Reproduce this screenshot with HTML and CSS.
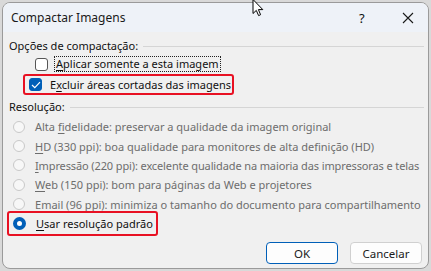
FILE: index.html
```html
<!DOCTYPE html>
<html lang="pt">
<head>
<meta charset="utf-8">
<link rel="stylesheet" href="styles.css">
</head>
<body>
<div class="dialog">
  <div class="titlebar">
    <span class="title">Compactar Imagens</span>
    <span class="help">?</span>
    <svg class="close" width="12" height="12" viewBox="0 0 12 12"><path d="M1 1L11 11M11 1L1 11" stroke="#1a1a1a" stroke-width="1.1" fill="none"/></svg>
  </div>
  <div class="body">
    <div class="group-title"><span>Opções de compactação:</span><i class="rule"></i></div>
    <div class="checks">
      <div class="row check"><span class="box"></span><span class="label focus"><u>A</u>plicar somente a esta imagem</span></div>
      <div class="row check hl"><span class="box on"><svg width="10" height="8" viewBox="0 0 10 8"><path d="M1 4L3.8 6.6L9 1.2" stroke="#fff" stroke-width="1.2" fill="none"/></svg></span><span class="label">E<u>x</u>cluir áreas cortadas das imagens</span></div>
    </div>
    <div class="group-title res"><span>Resolução:</span><i class="rule"></i></div>
    <div class="radios">
      <div class="row radio dis"><span class="dot"></span><span class="label">Alta <u>f</u>idelidade: preservar a qualidade da imagem original</span></div>
      <div class="row radio dis"><span class="dot"></span><span class="label"><u>H</u>D (330 ppi): boa qualidade para monitores de alta definição (HD)</span></div>
      <div class="row radio dis"><span class="dot"></span><span class="label tight"><u>I</u>mpressão (220 ppi): excelente qualidade na maioria das impressoras e telas</span></div>
      <div class="row radio dis"><span class="dot"></span><span class="label"><u>W</u>eb (150 ppi): bom para páginas da Web e projetores</span></div>
      <div class="row radio dis"><span class="dot"></span><span class="label"><u>E</u>mail (96 ppi): minimiza o tamanho do documento para compartilhamento</span></div>
      <div class="row radio hl sel"><span class="dot on"></span><span class="label"><u>U</u>sar resolução padrão</span></div>
    </div>
    <div class="buttons">
      <button class="btn primary">OK</button>
      <button class="btn">Cancelar</button>
    </div>
  </div>
</div>
<svg class="cursor" width="14" height="20" viewBox="0 0 14 20"><path d="M1 0.5L1 14.5L4.3 11.4L6.6 16.6L8.6 15.7L6.4 10.6L10.8 10.6Z" fill="#fff" stroke="#000" stroke-width="1"/></svg>
</body>
</html>
```
FILE: styles.css
```css
html, body { margin: 0; padding: 0; }
body {
  width: 431px; height: 271px; overflow: hidden;
  background: #d9d9d9;
  font-family: "Segoe UI", "Noto Sans", sans-serif;
  font-size: 11px; color: #111;
  position: relative;
  white-space: nowrap;
}
.dialog {
  margin: 2px 0 0 2px;
  width: 425px; height: 265px;
  border: 1px solid #9a9a9a;
  border-radius: 8px;
  background: #f0f0f0;
  overflow: hidden;
  display: flex; flex-direction: column;
}
.titlebar {
  height: 29px; flex: none;
  background: #eef2f8;
  display: flex; align-items: center;
  padding-left: 8px;
}
.title { font-size: 12px; flex: 1; color: #1a1a1a; }
.help { font-size: 13px; width: 12px; margin-right: 31px; }
.close { margin-right: 14px; }
.body { flex: 1; display: flex; flex-direction: column; padding: 5px 4px 0 6px; }
.group-title { display: flex; align-items: center; height: 17px; }
.group-title .rule { flex: 1; height: 1px; background: #d5d5d5; margin-left: 5px; margin-top: 1px; }
.group-title.res { margin-top: 3px; }
.checks { display: flex; flex-direction: column; padding-left: 20px; }
.row { display: flex; align-items: center; height: 20px; }
.check .box {
  width: 11px; height: 11px; border: 1px solid #555; border-radius: 3px;
  background: #fff; margin: 0 8px 0 6px; display: flex; align-items: center; justify-content: center; flex: none;
}
.check .box.on { background: #005fb8; border-color: #005fb8; }
.label.focus { outline: 1px dotted #222; outline-offset: 0; padding: 0 1px; margin-left: -1px; line-height: 14px; }
.hl { border: 2px solid #e81123; border-radius: 3px; align-self: flex-start; padding-right: 1px; height: 17px; }
.check.hl { margin-left: -6px; }
.check.hl .box { margin-left: 4px; }
.radios { display: flex; flex-direction: column; margin-top: 2px; }
.radio { height: 19.4px; padding-left: 4px; }
.radio .dot {
  width: 12px; height: 12px; border-radius: 50%; border: 1px solid #c9c9c9; background: #f7f7f7;
  margin-right: 10px; box-sizing: border-box; flex: none;
}
.radio.dis .label { color: #6d6d6d; }
.label.tight { letter-spacing: -0.12px; }
.radio.sel { margin-left: -2px; margin-top: -3px; height: 21px; padding-left: 4px; padding-right: 3px; }
.radio .dot.on { border: 4px solid #005fb8; background: #fff; width: 13px; height: 13px; }
.buttons { margin-top: auto; margin-bottom: 4px; display: flex; justify-content: flex-end; gap: 12px; padding-right: 2px; }
.btn {
  width: 72px; height: 22px; font: inherit; font-size: 11.5px; color: #1a1a1a;
  background: #fdfdfd; border: 1px solid #d0d0d0; border-radius: 4px; padding: 0;
}
.btn.primary { border: 1px solid #005fb8; }
u { text-decoration: underline; text-underline-offset: 2px; }
.cursor { position: absolute; left: 252px; top: -1px; }
```
